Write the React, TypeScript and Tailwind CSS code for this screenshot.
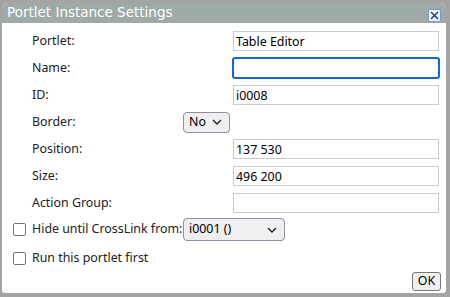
import React from 'react'

const font = { fontFamily: '"Noto Sans", "Open Sans", sans-serif' }

function TextRow({ label, value, focused }: { label: string; value?: string; focused?: boolean }) {
  return (
    <div className="flex items-center h-[20px]">
      <div className="w-[231px] shrink-0 pl-[30px] text-[12.4px] text-[#222]">{label}</div>
      <input
        readOnly
        value={value ?? ''}
        className={`w-[206px] h-[20px] px-[2px] text-[12.4px] text-black bg-white border outline-none ${
          focused ? 'border-[#1667d9] ring-1 ring-[#1667d9] rounded-[2px]' : 'border-[#cbcbcb]'
        }`}
        style={font}
      />
    </div>
  )
}

function FakeSelect({ value, width, height }: { value: string; width: string; height: string }) {
  return (
    <div
      className={`${width} ${height} shrink-0 flex items-center justify-between pl-[5px] pr-[7px] bg-[#efeff2] border border-[#8f8f9d] rounded-[4px] text-[12.4px] text-black`}
    >
      <span>{value}</span>
      <svg width="10" height="6" viewBox="0 0 10 6" fill="none">
        <path d="M1 1l4 4 4-4" stroke="#222" strokeWidth="1.4" />
      </svg>
    </div>
  )
}

function CheckBox() {
  return <span className="inline-block shrink-0 w-[13px] h-[13px] border border-[#767676] rounded-[2px] bg-white" />
}

export default function App() {
  return (
    <div className="w-[450px] h-[297px] bg-[#a4a4a4] pt-[3px] pl-[2px]" style={font}>
      <div className="w-[444px] h-[290px] bg-white rounded-t-[6px] rounded-bl-[3px] rounded-br-[3px] overflow-hidden flex flex-col">
        {/* Title bar */}
        <div className="h-[20px] bg-[#9eaaa7] flex items-center justify-between pl-[5px] pr-[5px]">
          <span
            className="text-[13.5px] text-white leading-none"
            style={{ fontFamily: '"DejaVu Sans", sans-serif' }}
          >
            Portlet Instance Settings
          </span>
          <span className="w-[13px] h-[13px] mt-[5px] flex items-center justify-center bg-[#eef3fd] border border-[#7b97d8] rounded-[2px]">
            <svg width="9" height="9" viewBox="0 0 9 9">
              <path d="M1 1l7 7M8 1L1 8" stroke="#243f86" strokeWidth="1.5" />
            </svg>
          </span>
        </div>

        {/* Body */}
        <div className="flex flex-col pt-[8px] gap-[7px]">
          <TextRow label="Portlet:" value="Table Editor" />
          <TextRow label="Name:" focused />
          <TextRow label="ID:" value="i0008" />
          <div className="flex items-center h-[20px]">
            <div className="w-[181px] shrink-0 pl-[30px] text-[12.4px] text-[#222]">Border:</div>
            <FakeSelect value="No" width="w-[47px]" height="h-[21px]" />
          </div>
          <TextRow label="Position:" value="137 530" />
          <TextRow label="Size:" value="496 200" />
          <TextRow label="Action Group:" />
        </div>

        <div className="flex items-center h-[23px] mt-[5px] pl-[11px]">
          <CheckBox />
          <span className="ml-[6px] text-[12.4px] text-[#222] w-[151px] whitespace-nowrap">
            Hide until CrossLink from:
          </span>
          <FakeSelect value="i0001 ()" width="w-[102px]" height="h-[23px]" />
        </div>

        <div className="flex items-center h-[13px] mt-[11px] pl-[11px]">
          <CheckBox />
          <span className="ml-[6px] text-[12.4px] text-[#222]">Run this portlet first</span>
        </div>

        <div className="flex justify-end mt-[7px] pr-[5px]">
          <button className="h-[19px] w-[29px] bg-[#efefef] border border-[#767676] rounded-[3px] text-[12.4px] text-black leading-none">
            OK
          </button>
        </div>
      </div>
    </div>
  )
}
